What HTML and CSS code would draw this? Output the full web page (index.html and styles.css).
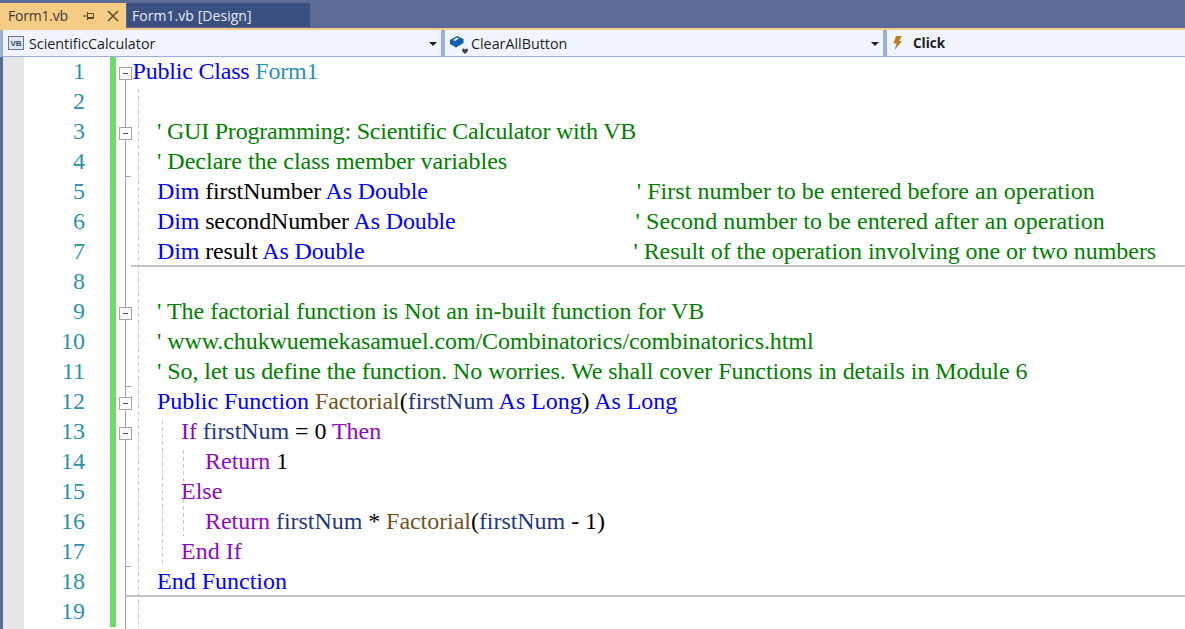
FILE: index.html
```html
<!DOCTYPE html>
<html lang="en">
<head>
<meta charset="utf-8">
<title>Form1.vb</title>
<link rel="stylesheet" href="styles.css">
</head>
<body>
<div class="tabs">
  <div class="tab tab-active"><span class="tab-name">Form1.vb</span>
    <svg class="pin" width="12" height="12" viewBox="0 0 12 12"><path d="M0 6H4M4.500 2V10M4.500 3.500H10.500V8.500H4.500M4.500 7.500H10.500" fill="none" stroke="#5b4a2a"/></svg>
    <svg class="close" width="12" height="12" viewBox="0 0 12 12"><path d="M1 1L11 11M11 1L1 11" fill="none" stroke="#5b4a2a" stroke-width="1.500"/></svg>
  </div>
  <div class="tab tab-inactive">Form1.vb [Design]</div>
</div>
<div class="nav">
  <div class="combo combo-a">
    <svg class="ico ico-vb" width="16" height="16" viewBox="0 0 16 16"><rect x="0.500" y="1.500" width="15" height="13" fill="#dfe6f2" stroke="#5f7c9c"/><text x="8" y="11" class="vb-text" text-anchor="middle">VB</text></svg>
    <span class="combo-text">ScientificCalculator</span><span class="arrow"></span>
  </div>
  <div class="combo combo-b">
    <svg class="ico ico-obj" width="20" height="20" viewBox="0 0 20 20"><path d="M1 5L8 1L14.500 4V8L7 12.500L1 9Z" fill="#0e5fa8"/><path d="M4 5L8 2.500L10 3.500L6 6Z" fill="#e3eef9"/><path d="M13 15a1.500 1.500 0 0 1 3 0a1.500 1.500 0 0 1 3 0c0 1.500-1.500 2.500-3 4c-1.500-1.500-3-2.500-3-4Z" fill="#444"/></svg>
    <span class="combo-text">ClearAllButton</span><span class="arrow"></span>
  </div>
  <div class="combo combo-c">
    <svg class="ico bolt" width="9" height="14" viewBox="0 0 9 14"><path d="M3 0H9L6 5H9L1.500 14L3.500 7.500H0.500Z" fill="#c27d1e"/></svg>
    <span class="combo-text combo-bold">Click</span>
  </div>
</div>
<div class="editor">
  <div class="guide guide-1"></div>
  <div class="guide guide-2"></div>
  <div class="guide guide-3"></div>
  <div class="outline-line"></div>
  <div class="tick tick-4"></div>
  <div class="tick tick-11"></div>
  <div class="tick tick-17"></div>
  <div class="tick tick-18"></div>
  <div class="fold fold-1"></div>
  <div class="fold fold-3"></div>
  <div class="fold fold-9"></div>
  <div class="fold fold-12"></div>
  <div class="fold fold-13"></div>
  <div class="rule rule-7"></div>
  <div class="rule rule-18"></div>
  <div class="row"><span class="num">1</span><span class="code ls-title"><b class="kw">Public Class</b> <b class="ty">Form1</b></span></div>
  <div class="row"><span class="num">2</span><span class="code"></span></div>
  <div class="row"><span class="num">3</span><span class="code i1 ls-3"><b class="cm">' GUI Programming: Scientific Calculator with VB</b></span></div>
  <div class="row"><span class="num">4</span><span class="code i1"><b class="cm">' Declare the class member variables</b></span></div>
  <div class="row"><span class="num">5</span><span class="code i1 ls-base"><b class="kw">Dim</b> firstNumber <b class="kw">As Double</b><b class="cm tail-5">' First number to be entered before an operation</b></span></div>
  <div class="row"><span class="num">6</span><span class="code i1 ls-base"><b class="kw">Dim</b> secondNumber <b class="kw">As Double</b><b class="cm tail-6">' Second number to be entered after an operation</b></span></div>
  <div class="row"><span class="num">7</span><span class="code i1 ls-base"><b class="kw">Dim</b> result <b class="kw">As Double</b><b class="cm tail-7">' Result of the operation involving one or two numbers</b></span></div>
  <div class="row"><span class="num">8</span><span class="code"></span></div>
  <div class="row"><span class="num">9</span><span class="code i1"><b class="cm">' The factorial function is Not an in-built function for VB</b></span></div>
  <div class="row"><span class="num">10</span><span class="code i1 ls-10"><b class="cm">' www.chukwuemekasamuel.com/Combinatorics/combinatorics.html</b></span></div>
  <div class="row"><span class="num">11</span><span class="code i1 ls-11"><b class="cm">' So, let us define the function. No worries. We shall cover Functions in details in Module 6</b></span></div>
  <div class="row"><span class="num">12</span><span class="code i1 ls-fine"><b class="kw">Public Function</b> <b class="fn">Factorial</b>(<b class="var">firstNum</b> <b class="kw">As Long</b>) <b class="kw">As Long</b></span></div>
  <div class="row"><span class="num">13</span><span class="code i2 ls-fine"><b class="ctl">If</b> <b class="var">firstNum</b> = 0 <b class="ctl">Then</b></span></div>
  <div class="row"><span class="num">14</span><span class="code i3"><b class="ctl">Return</b> 1</span></div>
  <div class="row"><span class="num">15</span><span class="code i2"><b class="ctl">Else</b></span></div>
  <div class="row"><span class="num">16</span><span class="code i3 ls-fine"><b class="ctl">Return</b> <b class="var">firstNum</b> * <b class="fn">Factorial</b>(<b class="var">firstNum</b> - 1)</span></div>
  <div class="row"><span class="num">17</span><span class="code i2"><b class="ctl">End If</b></span></div>
  <div class="row"><span class="num">18</span><span class="code i1"><b class="kw">End Function</b></span></div>
  <div class="row"><span class="num">19</span><span class="code"></span></div>
</div>
</body>
</html>
```
FILE: styles.css
```css
html, body { margin: 0; padding: 0; }
body { width: 1185px; height: 629px; overflow: hidden; background: #5d6b99; font-family: "Open Sans", "Noto Sans", sans-serif; }
b { font-weight: normal; }

.tabs { display: flex; height: 25px; padding-top: 3px; gap: 1px; border-bottom: 2px solid #f5cc84; }
.tab { display: flex; align-items: center; font-size: 14px; white-space: nowrap; }
.tab-active { width: 126px; background: #f5cc84; color: #3c3c3c; padding-left: 8px; box-sizing: border-box; }
.tab-name { width: 75px; letter-spacing: -0.2px; }
.pin { margin-right: 12px; }
.tab-inactive { width: 178px; height: 24px; background: #3b4f81; color: #e6e9f2; padding-left: 5px; letter-spacing: 0.05px; }

.nav { display: flex; height: 26px; background: #9aaed6; border-bottom: 1px solid #9aaed6; gap: 4px; padding-left: 3px; }
.combo { display: flex; align-items: center; background: #f0f4fd; font-size: 14.3px; color: #1e1e1e; position: relative; }
.combo-a { width: 438px; padding-left: 5px; box-sizing: border-box; }
.combo-b { width: 438px; padding-left: 4px; box-sizing: border-box; }
.combo-c { flex: 1; padding-left: 6px; }
.ico { flex: none; }
.ico-vb { margin-right: 5px; }
.ico-obj { margin-right: 2px; margin-top: 3px; }
.vb-text { font: bold 8px "Liberation Sans", sans-serif; fill: #33475f; }
.bolt { margin-right: 11px; }
.combo-bold { font-weight: 700; font-size: 13.5px; }
.arrow { position: absolute; right: 4px; top: 12px; border: 4px solid transparent; border-top-color: #222; border-bottom-width: 0; }

.editor { position: relative; height: 573px; overflow: hidden; margin-left: 3px; background: linear-gradient(to right, #e6e7e8 21px, #fff 21px); font: 24px/30px "Liberation Serif", "Times New Roman", serif; color: #000; }
.editor::before { content: ""; position: absolute; left: 107px; top: 0; width: 6px; height: 570px; background: #6edc6c; }
.row { display: flex; height: 30px; white-space: pre; }
.num { width: 82px; text-align: right; color: #2b91af; flex: none; margin-top: -1px; }
.code { margin-left: 47.5px; margin-top: -1px; }
.i1 { padding-left: 24.5px; }
.i2 { padding-left: 48.5px; }
.i3 { padding-left: 72.5px; }
.ls-title { letter-spacing: -0.2px; }
.ls-base { letter-spacing: -0.13px; }
.ls-fine { letter-spacing: -0.05px; }
.ls-3 { letter-spacing: -0.21px; }
.ls-10 { letter-spacing: -0.08px; }
.ls-11 { letter-spacing: -0.065px; }
.tail-5 { margin-left: 209px; letter-spacing: 0.04px; }
.tail-6 { margin-left: 180px; letter-spacing: 0.08px; }
.tail-7 { margin-left: 269px; letter-spacing: -0.04px; }
.kw { color: #0000ff; }
.ty { color: #2b91af; }
.cm { color: #008000; }
.fn { color: #74531f; }
.var { color: #1f377f; }
.ctl { color: #8f08c4; }

.guide { position: absolute; width: 1px; background: repeating-linear-gradient(to bottom, #c8c8c8 0 4px, transparent 4px 7px); }
.guide-1 { left: 135px; top: 32px; bottom: 0; }
.guide-2 { left: 159px; top: 363px; height: 146px; }
.guide-3 { left: 180px; top: 393px; height: 86px; }
.outline-line { position: absolute; left: 122px; top: 22px; bottom: 0; width: 1px; background: #a5a5a5; }
.tick { position: absolute; left: 122px; width: 6px; height: 1px; background: #a5a5a5; }
.tick-4 { top: 119px; }
.tick-11 { top: 329px; }
.tick-17 { top: 509px; }
.tick-18 { top: 539px; }
.fold { position: absolute; left: 116px; width: 11px; height: 11px; border: 1px solid #a5a5a5; background: linear-gradient(#555, #555) center / 5px 1px no-repeat #fff; }
.fold-1 { top: 10px; }
.fold-3 { top: 70px; }
.fold-9 { top: 250px; }
.fold-12 { top: 340px; }
.fold-13 { top: 370px; }
.rule { position: absolute; height: 2px; right: 0; background: #c4c4c4; }
.rule-7 { left: 128px; top: 208px; }
.rule-18 { left: 123px; top: 538px; }
```
